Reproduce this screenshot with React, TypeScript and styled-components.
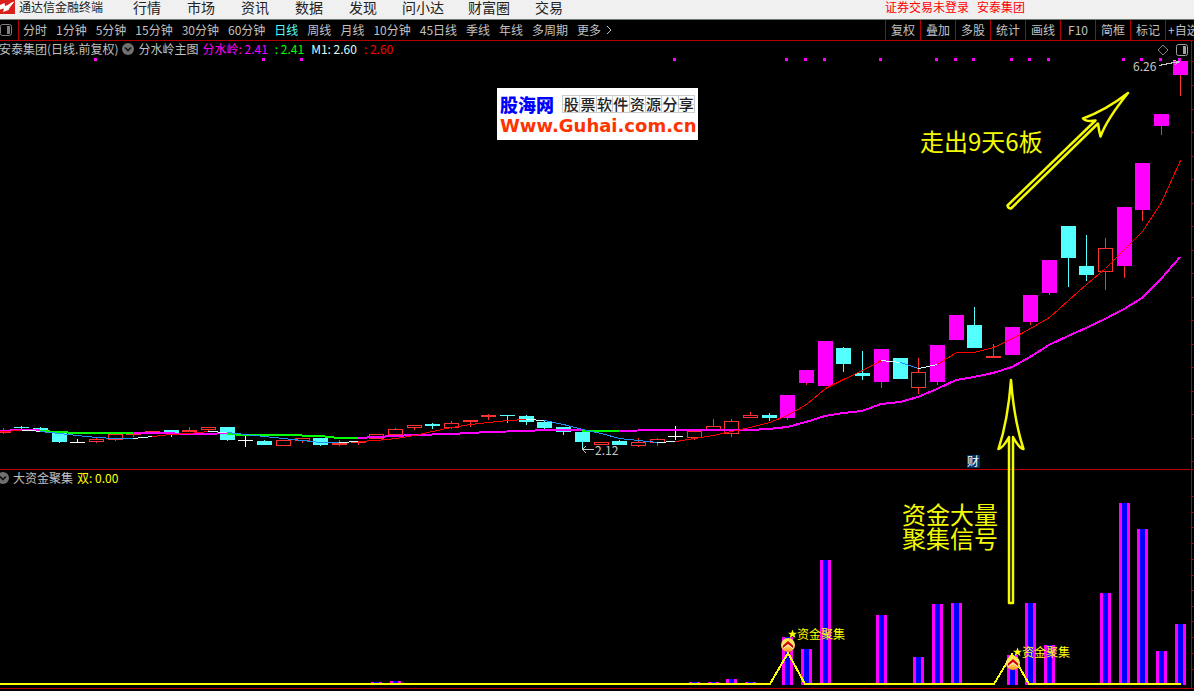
import React from "react";
import styled, { createGlobalStyle } from "styled-components";

const GlobalStyle = createGlobalStyle`
  * { box-sizing: border-box; }
  body {
    margin: 0;
    background: #000;
    color: #c0c0c0;
    font: 12px/14px "Noto Sans CJK SC", sans-serif;
    overflow-x: hidden;
  }
  button { font: inherit; color: inherit; border: 0; background: none; padding: 0; white-space: nowrap; cursor: pointer; }
  a { color: inherit; text-decoration: none; }
`;

const MAGENTA = "#ff00ff";
const CYAN = "#54ffff";
const RED = "#ff3232";
const GREEN = "#00ff00";
const YELLOW = "#ffff00";
const AXIS = "#b40000";
const PALE = "#d8ffff";
const BLUE = "#1e90ff";

/* ---------- layout ---------- */

const Page = styled.main`
  display: flex;
  flex-direction: column;
  overflow: hidden;
`;

const MenuBar = styled.header`
  display: flex;
  align-items: flex-start;
  height: 20px;
  background: #f0f0f0;
  border-bottom: 1px solid #707a76;
  color: #222;
  white-space: nowrap;
`;

const Brand = styled.div`
  display: flex;
  align-items: flex-start;
  gap: 3px;
  width: 120px;
`;

const BrandMark = styled.svg`
  display: block;
  width: 16px;
  height: 15px;
`;

const Menu = styled.nav`
  display: flex;
  flex: 1;
`;

const MenuItem = styled.button<{ $long?: boolean }>`
  font-size: 14px;
  line-height: 14px;
  padding: 0 ${(p) => (p.$long ? 12 : 13)}px;
`;

const Account = styled.div`
  display: flex;
  gap: 8px;
  padding-right: 169px;
  color: #ff0000;
`;

const Toolbar = styled.div`
  display: flex;
  align-items: stretch;
  height: 21px;
  border-bottom: 1px solid ${AXIS};
`;

const PaneToggle = styled.button`
  display: flex;
  align-items: center;
  width: 19px;
  border-right: 1px solid ${AXIS};
`;

const Periods = styled.nav`
  display: flex;
  flex: 1;
  gap: 9px;
  padding-left: 4px;
`;

const Period = styled.button<{ $active?: boolean }>`
  display: flex;
  align-items: center;
  gap: 5px;
  color: ${(p) => (p.$active ? CYAN : "#c0c0c0")};
`;

const Tools = styled.div`
  display: flex;
`;

const Tool = styled.button<{ $cut?: boolean }>`
  width: ${(p) => (p.$cut ? 29 : 35)}px;
  padding-left: ${(p) => (p.$cut ? 2 : 0)}px;
  text-align: ${(p) => (p.$cut ? "left" : "center")};
  border-left: 1px solid ${AXIS};
  overflow: hidden;
`;

const Charts = styled.section`
  position: relative;
`;

const Panel = styled.section`
  display: grid;
  border-bottom: 1px solid ${AXIS};
  & > * { grid-area: 1 / 1; }
  &:last-of-type { border-bottom: 0; }
`;

const Plot = styled.svg`
  display: block;
  width: 100%;
  height: auto;
`;

const Legend = styled.div<{ $shift: number }>`
  display: flex;
  align-items: center;
  align-self: start;
  gap: 4px;
  height: 16px;
  margin-left: -${(p) => p.$shift}px;
  z-index: 1;
  white-space: nowrap;
`;

const LegendName = styled.span`
  color: #c0c0c0;
`;

const LegendValues = styled.div`
  display: flex;
  gap: 7px;
`;

const LegendValue = styled.span<{ $color: string }>`
  color: ${(p) => p.$color};
`;

const LegendTools = styled.div`
  display: flex;
  align-items: center;
  gap: 7px;
  margin-left: auto;
  padding: 2px 6px 0 0;
`;

const IconButton = styled.button`
  display: flex;
`;

const Annotations = styled.svg`
  position: absolute;
  inset: 0;
  width: 100%;
  height: 100%;
  pointer-events: none;
`;

const Watermark = styled.aside`
  position: absolute;
  top: 47px;
  left: 497px;
  width: 201px;
  height: 52px;
  padding: 5px 3px;
  background: #fff;
  white-space: nowrap;
`;

const WatermarkTop = styled.div`
  display: flex;
  align-items: center;
  justify-content: space-between;
  height: 22px;
`;

const WatermarkName = styled.b`
  color: #0000ff;
  font-size: 18px;
  font-weight: 900;
  line-height: 20px;
`;

const Slogan = styled.div`
  display: grid;
  grid-template-columns: repeat(8, 1fr);
  width: 133px;
  height: 18px;
  border: 1px solid #ccc;
  background: linear-gradient(#ccc, #ccc) 0 50% / 100% 1px no-repeat;
`;

const SloganCell = styled.span`
  color: #222;
  font-size: 15px;
  font-weight: 500;
  line-height: 15px;
  text-align: center;
  & + & { border-left: 1px solid #ccc; }
`;

const WatermarkUrl = styled.div`
  color: #ff3300;
  font: bold 18px/22px "DejaVu Sans", sans-serif;
`;

/* ---------- data ---------- */

type Kind = "up" | "down" | "flat" | "limit";
/* centre x, body top, body bottom, high, low, kind */
type Candle = [number, number, number, number, number, Kind];

const candles: Candle[] = [
  [3, 432, 433, 428, 434, "up"], [21, 427, 428, 426, 429, "down"], [40, 428, 430, 427, 430, "down"],
  [59, 432, 442, 432, 443, "down"], [77, 442, 443, 439, 443, "flat"], [96, 439, 442, 438, 443, "up"],
  [115, 434, 440, 434, 441, "up"], [133, 434, 435, 434, 437, "up"], [152, 431, 433, 431, 433, "up"],
  [171, 430, 433, 430, 437, "down"], [189, 430, 432, 427, 432, "up"], [208, 427, 430, 427, 432, "up"],
  [227, 427, 440, 427, 441, "down"], [245, 440, 441, 435, 447, "flat"], [264, 441, 445, 440, 445, "down"],
  [283, 440, 446, 440, 446, "up"], [302, 438, 441, 438, 443, "up"], [320, 438, 445, 438, 446, "down"],
  [339, 443, 445, 440, 446, "up"], [358, 441, 443, 441, 445, "up"], [376, 434, 439, 434, 439, "up"],
  [395, 429, 435, 428, 435, "up"], [414, 425, 428, 425, 430, "up"], [432, 424, 426, 423, 429, "down"],
  [451, 423, 428, 421, 429, "up"], [470, 420, 422, 420, 427, "up"], [488, 415, 417, 414, 420, "up"],
  [507, 415, 416, 415, 423, "down"], [526, 416, 422, 415, 425, "down"], [544, 422, 428, 420, 429, "down"],
  [563, 427, 432, 427, 435, "down"], [582, 432, 442, 432, 450, "down"], [601, 442, 445, 442, 445, "up"],
  [619, 441, 445, 440, 445, "down"], [638, 442, 446, 438, 447, "up"], [657, 439, 443, 438, 446, "up"],
  [675, 436, 437, 426, 440, "flat"], [694, 431, 438, 431, 440, "up"], [713, 426, 430, 419, 430, "up"],
  [731, 421, 434, 419, 437, "up"], [750, 415, 418, 412, 418, "up"], [769, 415, 418, 413, 421, "down"],
  [787, 395, 418, 395, 420, "limit"], [806, 370, 383, 370, 385, "limit"], [825, 341, 386, 341, 386, "limit"],
  [843, 348, 364, 347, 372, "down"], [862, 373, 376, 351, 380, "down"], [881, 349, 382, 349, 388, "limit"],
  [900, 358, 379, 358, 379, "down"], [918, 372, 388, 358, 394, "up"], [937, 345, 382, 345, 385, "limit"],
  [956, 315, 340, 315, 340, "limit"], [974, 325, 348, 307, 348, "down"], [993, 356, 358, 344, 358, "up"],
  [1012, 327, 355, 327, 355, "limit"], [1030, 295, 322, 295, 325, "limit"], [1049, 260, 293, 260, 295, "limit"],
  [1068, 226, 258, 226, 287, "down"], [1086, 266, 275, 235, 281, "down"], [1105, 248, 272, 238, 290, "up"],
  [1124, 207, 266, 207, 278, "limit"], [1142, 163, 210, 163, 221, "limit"], [1161, 114, 126, 114, 135, "limit"],
  [1180, 61, 75, 61, 96, "limit"],
];

const limitDots = [95, 263, 301, 674, 786, 805, 824, 880, 936, 955, 973, 1011, 1029, 1048, 1123, 1141, 1160, 1179];

/* colour, points */
type Run = [string, string];

const fastLine: Run[] = [
  ["#ff0000", "0,431 21,430"],
  [PALE, "21,430 31,430 40,431"],
  [BLUE, "40,431 59,433 77,435 96,437 115,438 133,438"],
  [PALE, "133,438 152,436"],
  ["#ff0000", "152,436 170,434 189,433 208,431"],
  [PALE, "208,431 227,432"],
  [BLUE, "227,432 245,434 264,436 283,438 302,440 320,442 339,442"],
  [PALE, "339,442 358,441"],
  ["#ff0000", "358,441 376,440 395,438 414,435 432,431 451,427 470,424 488,422 507,420 526,419"],
  [PALE, "526,419 544,420"],
  [BLUE, "544,420 563,424 582,429 601,433 619,438 638,440 657,442"],
  [PALE, "657,442 675,441"],
  ["#ff0000", "675,441 694,438 713,435 731,431 750,427 769,422 787,415 806,404 825,388 843,379 862,370 881,360"],
  [PALE, "881,360 900,362"],
  [BLUE, "900,362 918,368"],
  [PALE, "918,368 937,364"],
  ["#ff0000", "937,364 956,352 974,352 993,347 1012,338 1030,328 1049,317 1068,300 1086,284 1105,268 1124,249 1142,231 1161,202 1180,160"],
];

const slowLine: Run[] = [
  [MAGENTA, "0,431 21,430 40,430"],
  [GREEN, "40,431 59,432 77,433 133,433"],
  [MAGENTA, "133,433 160,433 189,434 208,434 227,433"],
  [GREEN, "227,434 245,435 283,435 320,436 339,438 358,438"],
  [MAGENTA, "358,438 376,437 395,436 414,435 451,434 470,433 488,432 526,431 544,430 582,430"],
  [GREEN, "582,431 619,431"],
  [MAGENTA, "619,431 657,430 750,430 769,429 787,427 806,422 825,416 843,413 862,411 881,404 900,402 918,397 937,389 956,380 974,377 993,373 1012,367 1030,357 1049,345 1068,336 1086,328 1105,319 1124,309 1142,298 1161,279 1180,257"],
];

/* left x, top y */
const volumes: [number, number][] = [
  [371, 682], [390, 681], [689, 682], [708, 682], [726, 679], [745, 682],
  [782, 637], [801, 649], [820, 560], [876, 615], [913, 657], [932, 604], [951, 603],
  [1007, 655], [1025, 603], [1044, 645], [1100, 593], [1119, 503], [1137, 529], [1156, 651], [1175, 624],
];

const priceTicks = [61, 85, 109, 132, 156, 179, 203, 226, 250, 273, 297, 320, 344, 367, 391, 414, 438, 461];
const flowTicks = [496, 512, 527, 543, 559, 575, 590, 606, 621, 637, 653, 669];

const menuItems = ["行情", "市场", "资讯", "数据", "发现", "问小达", "财富圈", "交易"];
const periods = ["分时", "1分钟", "5分钟", "15分钟", "30分钟", "60分钟", "日线", "周线", "月线", "10分钟", "45日线", "季线", "年线", "多周期"];
const tools = ["复权", "叠加", "多股", "统计", "画线", "F10", "简框", "标记"];

/* ---------- drawing parts ---------- */

function PaneIcon({ color }: { color: string }) {
  return (
    <svg width="12" height="12" viewBox="0 0 12 12">
      <rect x="0.5" y="0.5" width="11" height="11" rx="2" fill="none" stroke={color} />
      <rect x="7" y="2" width="3" height="8" fill={color} />
    </svg>
  );
}

function Chevron() {
  return (
    <svg width="12" height="12" viewBox="0 0 12 12">
      <circle cx="6" cy="6" r="6" fill="#707070" />
      <path d="M3 4.5 6 7.5 9 4.5" fill="none" stroke="#111" strokeWidth="1.6" />
    </svg>
  );
}

function CandleMark({ candle }: { candle: Candle }) {
  const [x, top, bottom, high, low, kind] = candle;
  const color = { up: RED, down: CYAN, flat: "#fff", limit: MAGENTA }[kind];
  const hollow = kind === "up" && bottom - top > 2;
  return (
    <g>
      <rect x={x} y={high} width="1" height={low - high} fill={kind === "limit" ? RED : color} />
      {hollow ? (
        <rect x={x - 6.5} y={top + 0.5} width="14" height={bottom - top - 1} fill="#000" stroke={color} />
      ) : (
        <rect x={x - 7} y={top} width="15" height={bottom - top} fill={color} />
      )}
    </g>
  );
}

function Axis({ ticks, top, bottom }: { ticks: number[]; top: number; bottom: number }) {
  return (
    <g fill={AXIS}>
      <rect x="1191" y={top} width="1" height={bottom - top} />
      {ticks.map((y) => (
        <rect key={y} x="1192" y={y} width="2" height="1" />
      ))}
    </g>
  );
}

function Signal({ x, y }: { x: number; y: number }) {
  return (
    <g transform={`translate(${x} ${y})`}>
      <circle r="7" fill="url(#coin)" />
      <path d="M-5 3.500 0 -0.500 5 3.500" fill="none" stroke="#fff" strokeWidth="1" />
      <path d="M-5 0.500 0 -4 5 0.500V3L0 -1 -5 3Z" fill="#c80000" />
      <path
        d="M4.500 -15.500 5.700 -12.300 9 -12.200 6.400 -10.200 7.400 -7 4.500 -8.900 1.600 -7 2.600 -10.200 0 -12.200 3.300 -12.300Z"
        fill={YELLOW}
      />
      <text x="9" y="-6" fill={YELLOW} fontSize="12">资金聚集</text>
    </g>
  );
}

function PricePlot() {
  return (
    <Plot viewBox="0 41 1194 428" shapeRendering="crispEdges" role="img" aria-label="日线">
      <Axis ticks={priceTicks} top={41} bottom={469} />
      {candles.map((c) => (
        <CandleMark key={c[0]} candle={c} />
      ))}
      {limitDots.map((x) => (
        <rect key={x} x={x - 1} y="58" width="3" height="3" fill={MAGENTA} />
      ))}
      <g fill="none" strokeWidth="2">
        {slowLine.map(([color, points]) => (
          <polyline key={points} points={points} stroke={color} />
        ))}
      </g>
      <g fill="none" strokeWidth="1" transform="translate(0.5 0.5)">
        {fastLine.map(([color, points]) => (
          <polyline key={points} points={points} stroke={color} />
        ))}
      </g>
      <g fill="none" stroke="#c8c8c8">
        <path d="M594 449.500H582.500M586 446 582.500 449.500 586 453" />
        <path d="M1159 65.500 1179 61.500M1173 60.500 1179 61.500 1175 65" />
      </g>
      <g fill="#c8c8c8" fontSize="12">
        <text x="595" y="455">2.12</text>
        <text x="1133" y="71">6.26</text>
      </g>
      <rect x="967" y="455" width="13" height="13" fill="#003366" />
      <text x="967" y="466" fill="#fff" fontSize="12">财</text>
    </Plot>
  );
}

function FlowPlot() {
  return (
    <Plot viewBox="0 470 1194 221" role="img" aria-label="大资金聚集">
      <defs>
        <linearGradient id="coin" x1="0" y1="0" x2="0" y2="1">
          <stop offset="0" stopColor="#ffe93a" />
          <stop offset="0.5" stopColor="#ffe27a" />
          <stop offset="1" stopColor="#ff9010" />
        </linearGradient>
      </defs>
      <g shapeRendering="crispEdges">
        <Axis ticks={flowTicks} top={470} bottom={689} />
        <rect x="0" y="688" width="1194" height="1" fill={AXIS} />
        {volumes.map(([x, y]) => (
          <g key={x}>
            <rect x={x} y={y} width="11" height={685 - y} fill={MAGENTA} />
            <rect x={x + 3} y={y} width="5" height={685 - y} fill="#0000ff" />
          </g>
        ))}
        <polyline
          points="0,684 770,684 788,653 805,684 994,684 1012,654 1029,684 1181,684"
          fill="none"
          stroke={YELLOW}
          strokeWidth="2"
        />
      </g>
      <Signal x={788} y={645} />
      <Signal x={1013} y={663} />
    </Plot>
  );
}

export default function App() {
  return (
    <Page>
      <GlobalStyle />
      <MenuBar>
        <Brand>
          <BrandMark viewBox="0 0 16 15">
            <rect width="15" height="14" fill="#d9201c" />
            <path d="M0 5 4.500 3 5 6C8 5.500 11 2 14.500 1.500 12 4.500 10 7 8.500 10L3 12 4 8.500 0 9.500Z" fill="#fff" />
          </BrandMark>
          通达信金融终端
        </Brand>
        <Menu>
          {menuItems.map((m) => (
            <MenuItem key={m} $long={m.length > 2}>{m}</MenuItem>
          ))}
        </Menu>
        <Account>
          <a href="#login">证券交易未登录</a>
          <a href="#stock">安泰集团</a>
        </Account>
      </MenuBar>

      <Toolbar>
        <PaneToggle aria-label="侧栏"><PaneIcon color="#808080" /></PaneToggle>
        <Periods>
          {periods.map((p) => (
            <Period key={p} $active={p === "日线"}>{p}</Period>
          ))}
          <Period>
            更多
            <svg width="6" height="10" viewBox="0 0 6 10">
              <path d="M1 1 5 5 1 9" fill="none" stroke="#c0c0c0" />
            </svg>
          </Period>
        </Periods>
        <Tools>
          {tools.map((t) => (
            <Tool key={t}>{t}</Tool>
          ))}
          <Tool $cut>+自选</Tool>
        </Tools>
      </Toolbar>

      <Charts>
        <Panel>
          <Legend $shift={1}>
            <LegendName>安泰集团(日线.前复权)</LegendName>
            <IconButton aria-label="主图选项"><Chevron /></IconButton>
            <LegendName>分水岭主图</LegendName>
            <LegendValues>
              <LegendValue $color={MAGENTA}>分水岭: 2.41</LegendValue>
              <LegendValue $color={GREEN}>: 2.41</LegendValue>
              <LegendValue $color={PALE}>M1: 2.60</LegendValue>
              <LegendValue $color="#ff0000">: 2.60</LegendValue>
            </LegendValues>
            <LegendTools>
              <IconButton aria-label="标记">
                <svg width="12" height="12" viewBox="0 0 12 12">
                  <path d="M6 1 11 6 6 11 1 6Z" fill="none" stroke="#808080" />
                </svg>
              </IconButton>
              <IconButton aria-label="窗格"><PaneIcon color="#a0a0a0" /></IconButton>
            </LegendTools>
          </Legend>
          <PricePlot />
        </Panel>
        <Panel>
          <Legend $shift={3}>
            <IconButton aria-label="副图选项"><Chevron /></IconButton>
            <LegendName>大资金聚集</LegendName>
            <LegendValue $color={YELLOW}>双: 0.00</LegendValue>
          </Legend>
          <FlowPlot />
        </Panel>

        <Watermark>
          <WatermarkTop>
            <WatermarkName>股海网</WatermarkName>
            <Slogan>
              {Array.from("股票软件资源分享").map((c) => (
                <SloganCell key={c}>{c}</SloganCell>
              ))}
            </Slogan>
          </WatermarkTop>
          <WatermarkUrl>Www.Guhai.com.cn</WatermarkUrl>
        </Watermark>

        <Annotations viewBox="0 41 1194 650">
          <g fill="none" stroke="#f4fa00" strokeWidth="2.500" strokeLinejoin="round">
            <path d="M1128 93Q1106 110 1083 118.500 1086 122 1095.500 120.500L1007.500 205.500Q1008 208.500 1011 208.500L1098 123.500Q1099 131 1100.500 136.500 1107 119 1128 93Z" />
            <path d="M1011 380Q1008 420 998.500 449 1003 448 1009 437V603H1013V437Q1019 448 1023.500 449 1014 420 1011 380Z" />
          </g>
          <g fill="#f4fa00" fontSize="24">
            <text x="920" y="151">走出9天6板</text>
            <text x="902" y="524">资金大量</text>
            <text x="902" y="548">聚集信号</text>
          </g>
        </Annotations>
      </Charts>
    </Page>
  );
}
